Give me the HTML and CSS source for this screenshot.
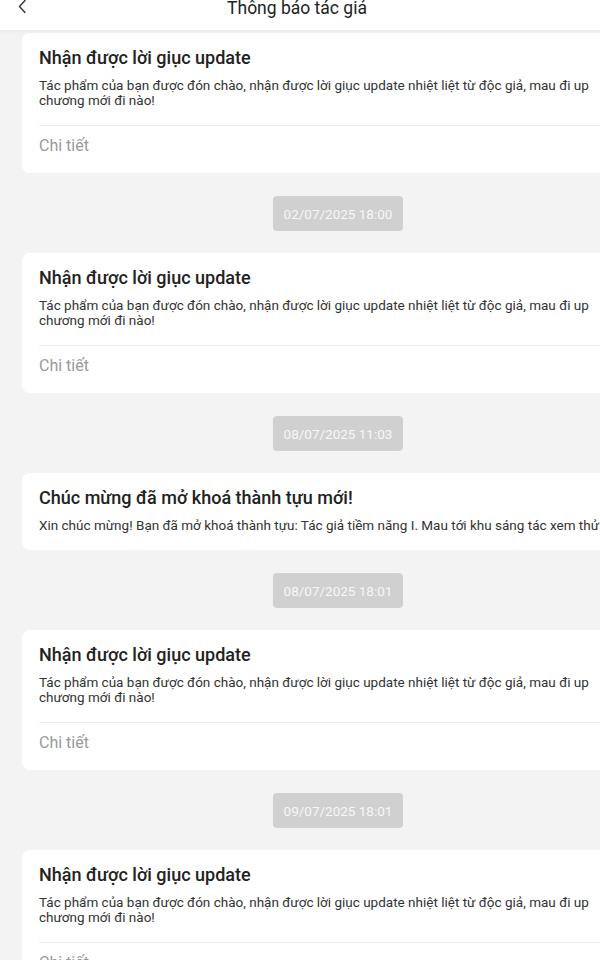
FILE: index.html
```html
<!DOCTYPE html>
<html lang="vi">
<head>
<meta charset="utf-8">
<title>Thông báo tác giả</title>
<link rel="stylesheet" href="styles.css">
</head>
<body>
<header class="topbar">
  <svg class="back" width="10" height="14" viewBox="0 0 10 14"><polyline points="7,0.5 1.5,6.5 7,12.5" fill="none" stroke="#333" stroke-width="1.4" stroke-linecap="round" stroke-linejoin="round"/></svg>
  <h1 class="title">Thông báo tác giả</h1>
</header>
<main class="feed">
  <article class="card">
    <h2 class="card-title">Nhận được lời giục update</h2>
    <p class="card-text">Tác phẩm của bạn được đón chào, nhận được lời giục update nhiệt liệt từ độc giả, mau đi up chương mới đi nào!</p>
    <div class="card-foot">Chi tiết</div>
  </article>
  <div class="stamp"><span class="pill">02/07/2025 18:00</span></div>
  <article class="card">
    <h2 class="card-title">Nhận được lời giục update</h2>
    <p class="card-text">Tác phẩm của bạn được đón chào, nhận được lời giục update nhiệt liệt từ độc giả, mau đi up chương mới đi nào!</p>
    <div class="card-foot">Chi tiết</div>
  </article>
  <div class="stamp"><span class="pill">08/07/2025 11:03</span></div>
  <article class="card">
    <h2 class="card-title">Chúc mừng đã mở khoá thành tựu mới!</h2>
    <p class="card-text single">Xin chúc mừng! Bạn đã mở khoá thành tựu: Tác giả tiềm năng I. Mau tới khu sáng tác xem thử nhé!</p>
  </article>
  <div class="stamp"><span class="pill">08/07/2025 18:01</span></div>
  <article class="card">
    <h2 class="card-title">Nhận được lời giục update</h2>
    <p class="card-text">Tác phẩm của bạn được đón chào, nhận được lời giục update nhiệt liệt từ độc giả, mau đi up chương mới đi nào!</p>
    <div class="card-foot">Chi tiết</div>
  </article>
  <div class="stamp"><span class="pill">09/07/2025 18:01</span></div>
  <article class="card">
    <h2 class="card-title">Nhận được lời giục update</h2>
    <p class="card-text">Tác phẩm của bạn được đón chào, nhận được lời giục update nhiệt liệt từ độc giả, mau đi up chương mới đi nào!</p>
    <div class="card-foot">Chi tiết</div>
  </article>
</main>
</body>
</html>
```
FILE: styles.css
```css
html, body {
  margin: 0;
  padding: 0;
}
body {
  width: 600px;
  height: 960px;
  overflow: hidden;
  background: #f3f3f3;
  font-family: Roboto, "Noto Sans", sans-serif;
  color: #222;
}
.topbar {
  position: relative;
  z-index: 2;
  height: 30px;
  background: #fff;
  display: flex;
  align-items: flex-start;
  justify-content: center;
  box-shadow: 0 1px 4px rgba(0, 0, 0, 0.06);
}
.back {
  position: absolute;
  left: 18px;
  top: 0;
}
.title {
  margin: 0;
  font-size: 17.5px;
  line-height: 16px;
  font-weight: 400;
  color: #222;
  padding-right: 6px;
}
.feed {
  width: 676px;
  padding-top: 3px;
  display: flex;
  flex-direction: column;
}
.card {
  margin: 0 22px;
  background: #fff;
  border-radius: 8px;
  padding: 14px 17px 0;
}
.card-title {
  margin: 0;
  font-size: 18px;
  line-height: 22px;
  font-weight: 500;
  color: #222;
}
.card-text {
  margin: 9px 0 0;
  font-size: 13.5px;
  line-height: 15px;
  color: #333;
  padding-bottom: 17px;
}
.card-text.single {
  white-space: nowrap;
  overflow: hidden;
  text-overflow: ellipsis;
}
.card-foot {
  border-top: 1px solid #eeeeee;
  padding: 10px 0 17px;
  font-size: 16px;
  line-height: 20px;
  color: #999;
}
.stamp {
  display: flex;
  justify-content: center;
  padding: 23px 0 22px;
}
.pill {
  width: 130px;
  height: 35px;
  display: flex;
  align-items: center;
  justify-content: center;
  background: #d0d0d0;
  border-radius: 4px;
  color: #f7f7f7;
  font-size: 13.5px;
}
```
